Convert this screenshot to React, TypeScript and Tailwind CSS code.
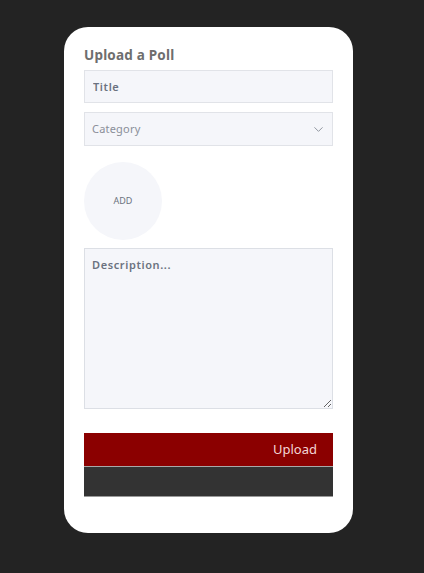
import { ChevronDown } from "lucide-react";

export default function App() {
  return (
    <div className="min-h-[573px] w-full bg-[#232323] pt-[27px] font-['Noto_Sans',sans-serif]">
      <div className="ml-[64px] flex h-[506px] w-[289px] flex-col rounded-[24px] bg-white px-[20px] pt-[18px]">
        <h1 className="text-[13.5px] font-bold leading-[20px] tracking-[0.2px] text-[#6e6e6e]">Upload a Poll</h1>

        <input
          placeholder="Title"
          className="mt-[5px] h-[33px] w-full border border-[#e1e3e8] bg-[#f5f6fa] px-[8px] text-[11px] font-semibold tracking-[0.6px] text-[#6b7280] placeholder:text-[#6b7280] outline-none"
        />

        <div className="relative mt-[9px] h-[34px] w-full border border-[#e1e3e8] bg-[#f5f6fa]">
          <select className="h-full w-full appearance-none bg-transparent px-[7px] text-[11px] tracking-[0.2px] text-[#8a8f99] outline-none">
            <option>Category</option>
          </select>
          <ChevronDown
            size={15}
            strokeWidth={1.5}
            className="pointer-events-none absolute right-[6px] top-[9px] text-[#8a8f99]"
          />
        </div>

        <button className="mt-[16px] flex h-[78px] w-[78px] items-center justify-center rounded-full bg-[#f5f6fa] text-[9px] text-[#6b7280]">
          ADD
        </button>

        <textarea
          placeholder="Description..."
          className="mt-[8px] h-[161px] w-full resize border border-[#dcdfe5] bg-[#f5f6fa] px-[7px] py-[8px] text-[11px] font-semibold tracking-[0.6px] text-[#6b7280] placeholder:text-[#6b7280] outline-none"
        />

        <div className="mt-[24px] flex flex-col">
          <button className="flex h-[34px] w-full items-center justify-end border-b border-[#a8a8a8] bg-[#8b0000] pr-[16px] text-[13px] text-[#f3d6d6]">
            Upload
          </button>
          <div className="h-[30px] w-full border-b border-[#9a9a9a] bg-[#333333]" />
        </div>
      </div>
    </div>
  );
}
